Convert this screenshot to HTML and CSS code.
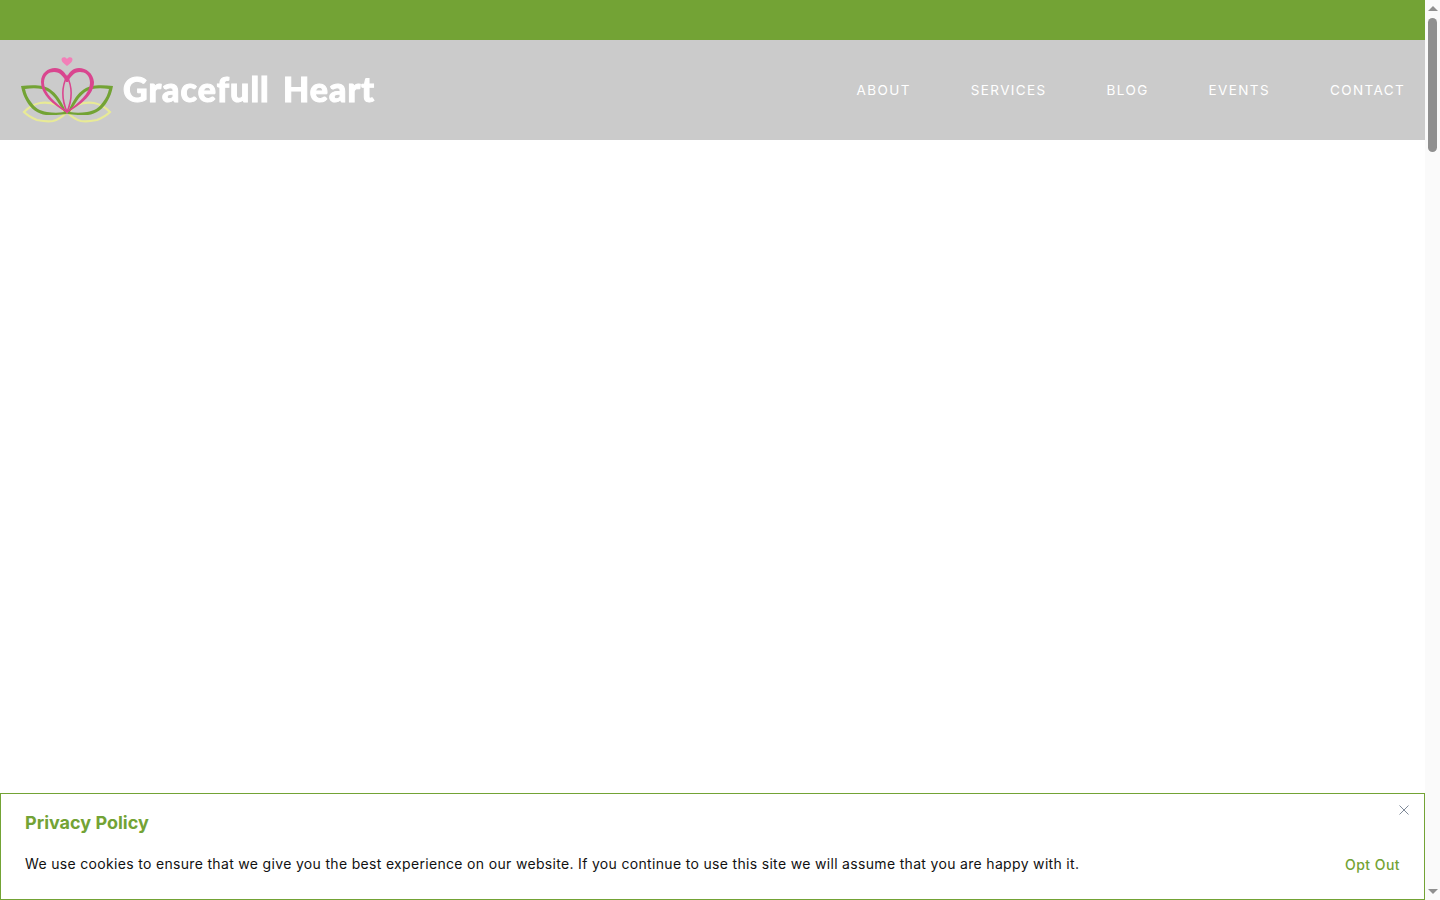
FILE: index.html
```html
<!DOCTYPE html>
<html lang="en">
<head>
    <meta charset="UTF-8">
    <meta name="viewport" content="width=device-width, initial-scale=1.0">
    <title>Gracefull Heart</title>
    <link rel="stylesheet" href="styles.css">
</head>
<body>
    <div class="page">
        <div class="topbar"></div>
        <header class="header">
            <a class="logo" href="#">
                <svg class="logo-mark" viewBox="20 55 96 72" width="96" height="72">
                    <g fill="none" stroke="#e8ea96" stroke-width="2.2">
                        <path d="M24 112C29 107 34 104 40 103C47 102 52 103 57 105C61 107 63 110 66 113C62 117 58 120 53 121C47 122 42 121 37 120C32 118 28 116 24 112Z"/>
                        <path d="M110 112C105 107 100 104 94 103C87 102 82 103 77 105C73 107 71 110 68 113C72 117 76 120 81 121C87 122 92 121 97 120C102 118 106 116 110 112Z"/>
                    </g>
                    <path fill="#73a335" fill-rule="evenodd" d="M21 86C29 85 37 85 43 86C50 88 56 93 60 100C63 105 65 109 67 114C60 115 52 115 46 115C38 114 31 109 27 102C24 97 22 92 21 86ZM25 89C26 94 28 98 31 102C35 108 40 111 47 112C53 113 59 113 64 112C61 107 58 102 55 98C51 93 47 90 42 89C37 88 31 88 25 89Z"/>
                    <path fill="#73a335" fill-rule="evenodd" d="M113 86C105 85 97 85 91 86C84 88 78 93 74 100C71 105 69 109 67 114C74 115 82 115 88 115C96 114 103 109 107 102C110 97 112 92 113 86ZM109 89C108 94 106 98 103 102C99 108 94 111 87 112C81 113 75 113 70 112C73 107 76 102 79 98C83 93 87 90 92 89C97 88 103 88 109 89Z"/>
                    <path fill="none" stroke="#d9468f" stroke-width="1.6" d="M67 112C61 98 62 86 67 76C72 86 73 98 67 112Z"/>
                    <path fill="#d9468f" fill-rule="evenodd" d="M67 113C52 104 41 94 41 82C41 73 48 68 55 68C61 68 65 72 67 77C69 72 73 68 79 68C86 68 93 73 94 82C94 94 82 104 67 113ZM67 111C79 103 90 93 90 83C90 75 85 72 80 72C74 72 70 77 68 82L66 82C64 77 60 72 54 72C49 72 44 75 44 83C44 93 55 103 67 111Z"/>
                    <path fill="#f27fb8" d="M67 66C64 63.500 61.500 62 61.500 59.500C61.500 57 65.500 56.500 67 59C68.500 56.500 72.500 57 72.500 59.500C72.500 62 70 63.500 67 66Z"/>
                </svg>
                <span class="logo-text">Gracefull Heart</span>
            </a>
            <nav class="nav">
                <a href="#">ABOUT</a>
                <a href="#">SERVICES</a>
                <a href="#">BLOG</a>
                <a href="#">EVENTS</a>
                <a href="#">CONTACT</a>
            </nav>
        </header>
        <main class="content"></main>
    </div>

    <div class="scrollbar">
        <div class="arrow arrow-up"></div>
        <div class="track"><div class="thumb"></div></div>
        <div class="arrow arrow-down"></div>
    </div>

    <div class="cookie">
        <button class="cookie-close" aria-label="Close">
            <svg viewBox="0 0 10 10" width="10" height="10" fill="none" stroke="#7f8a99" stroke-width="1"><path d="M0.500 0.500L9.500 9.500M9.500 0.500L0.500 9.500"/></svg>
        </button>
        <h3 class="cookie-title">Privacy Policy</h3>
        <div class="cookie-row">
            <p class="cookie-text">We use cookies to ensure that we give you the best experience on our website. If you continue to use this site we will assume that you are happy with it.</p>
            <a class="cookie-opt" href="#">Opt Out</a>
        </div>
    </div>
</body>
</html>
```

FILE: styles.css
```css
* { box-sizing: border-box; }
html, body { height: 100%; }
body { margin: 0; display: flex; height: 900px; overflow: hidden; background: #fff; font-family: Inter, "Open Sans", sans-serif; }
a { text-decoration: none; color: inherit; }

.page { flex: 1; display: flex; flex-direction: column; min-width: 0; }
.topbar { height: 40px; background: #73a335; }
.header { height: 100px; background: #cbcbcb; display: flex; align-items: center; justify-content: space-between; padding: 0 20px; }
.logo { display: flex; align-items: center; gap: 7px; }
.logo-mark { display: block; margin-top: 2px; filter: blur(0.35px); }
.logo-text { font-family: Lato, sans-serif; font-weight: 900; font-size: 34px; color: #fff; white-space: pre; word-spacing: 4px; letter-spacing: 1.05px; -webkit-text-stroke: 1px #fff; filter: blur(0.35px); margin-bottom: 3px; }
.nav { display: flex; gap: 60px; }
.nav a { color: #fff; font-size: 13.5px; letter-spacing: 1.38px; line-height: 20px; }
.content { flex: 1; background: #fff; }

.scrollbar { width: 15px; background: #fafafa; display: flex; flex-direction: column; align-items: center; }
.arrow { width: 0; height: 0; border-left: 5px solid transparent; border-right: 5px solid transparent; }
.arrow-up { border-bottom: 5px solid #8f8f8f; margin: 6px 0 3px; }
.arrow-down { border-top: 5px solid #8f8f8f; margin: 3px 0 6px; }
.track { flex: 1; width: 100%; padding: 4px 3px 0; }
.thumb { height: 134px; background: #8f8f8f; border-radius: 5px; }

.cookie { position: fixed; left: 0; right: 15px; bottom: 0; height: 107px; background: #fff; border: 1px solid #73a335; padding: 18px 24px 0; }
.cookie-title { margin: 0; color: #73a335; font-size: 18px; font-weight: 700; line-height: 22px; }
.cookie-row { display: flex; justify-content: space-between; align-items: flex-start; margin-top: 20px; }
.cookie-text { margin: 0; color: #111; font-size: 14px; letter-spacing: 0.325px; line-height: 20px; }
.cookie-opt { color: #73a335; font-size: 14px; font-weight: 500; letter-spacing: 0.45px; line-height: 20px; margin-top: 1px; }
.cookie-close { position: absolute; top: 11px; right: 15px; padding: 0; border: none; background: none; line-height: 0; cursor: pointer; }
```
